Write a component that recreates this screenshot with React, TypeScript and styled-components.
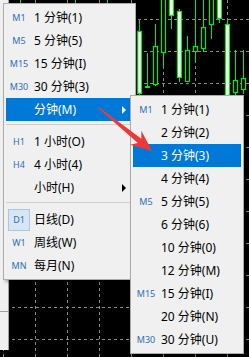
import React from 'react';
import styled, { createGlobalStyle } from 'styled-components';

const Global = createGlobalStyle`
  html, body { margin: 0; padding: 0; background: #000; }
  body {
    width: 249px; height: 357px; overflow: hidden;
    font-family: "Noto Sans", "Noto Sans CJK SC", sans-serif;
  }
`;

const Stage = styled.div`
  position: relative;
  width: 249px;
  height: 357px;
  background: #000;
  overflow: hidden;
`;

const Chart = styled.svg`
  display: block;
`;

const Overlay = styled.svg`
  position: absolute;
  left: 0;
  top: 0;
  pointer-events: none;
`;

const SidePanel = styled.div`
  position: absolute;
  left: 0;
  top: 0;
  width: 9px;
  height: 350px;
  box-sizing: border-box;
  background: #f0f0f0;
  border-right: 1px solid #a0a0a0;
  display: flex;
  flex-direction: column;
  justify-content: flex-end;
`;

const PanelRule = styled.div`
  height: 38px;
  border-top: 1px solid #a0a0a0;
`;

const Menu = styled.div<{ $left: number; $top: number; $width: number }>`
  position: absolute;
  left: ${(p) => p.$left}px;
  top: ${(p) => p.$top}px;
  width: ${(p) => p.$width}px;
  box-sizing: border-box;
  background: #f0f0f0;
  border: 1px solid #ababab;
  padding: 2px;
  box-shadow: 2px 2px 3px rgba(0, 0, 0, 0.3);
  display: flex;
  flex-direction: column;
`;

const Item = styled.div<{ $active?: boolean }>`
  display: grid;
  grid-template-columns: 26px 1fr auto;
  align-items: center;
  height: 23px;
  background: ${(p) => (p.$active ? '#0078d7' : 'transparent')};
  color: ${(p) => (p.$active ? '#ffffff' : '#000000')};
`;

const Tag = styled.span<{ $boxed?: boolean }>`
  justify-self: center;
  display: flex;
  align-items: center;
  justify-content: center;
  box-sizing: border-box;
  width: 22px;
  height: 22px;
  font-family: "Noto Sans", sans-serif;
  font-size: 9px;
  color: #2f6eb3;
  background: ${(p) => (p.$boxed ? '#d8e6f3' : 'transparent')};
  border: 1px solid ${(p) => (p.$boxed ? '#a9c7e3' : 'transparent')};
`;

const Label = styled.span`
  padding-left: 2px;
  font-size: 12px;
  line-height: 1;
  white-space: nowrap;
`;

const Caret = styled.span<{ $light?: boolean }>`
  width: 0;
  height: 0;
  margin-right: 7px;
  border-top: 4px solid transparent;
  border-bottom: 4px solid transparent;
  border-left: 4px solid ${(p) => (p.$light ? '#ffffff' : '#000000')};
`;

const Separator = styled.div`
  height: 1px;
  margin: 3px 0 5px 0;
  background: #cfcfcf;
`;

type Row = { tag?: string; text: string; active?: boolean; boxed?: boolean; sub?: boolean };

const mainTop: Row[] = [
  { tag: 'M1', text: '1 分钟(1)' },
  { tag: 'M5', text: '5 分钟(5)' },
  { tag: 'M15', text: '15 分钟(I)' },
  { tag: 'M30', text: '30 分钟(3)' },
  { text: '分钟(M)', active: true, sub: true },
];
const mainMid: Row[] = [
  { tag: 'H1', text: '1 小时(O)' },
  { tag: 'H4', text: '4 小时(4)' },
  { text: '小时(H)', sub: true },
];
const mainBottom: Row[] = [
  { tag: 'D1', text: '日线(D)', boxed: true },
  { tag: 'W1', text: '周线(W)' },
  { tag: 'MN', text: '每月(N)' },
];
const subRows: Row[] = [
  { tag: 'M1', text: '1 分钟(1)' },
  { text: '2 分钟(2)' },
  { text: '3 分钟(3)', active: true },
  { text: '4 分钟(4)' },
  { tag: 'M5', text: '5 分钟(5)' },
  { text: '6 分钟(6)' },
  { text: '10 分钟(0)' },
  { text: '12 分钟(M)' },
  { tag: 'M15', text: '15 分钟(I)' },
  { text: '20 分钟(N)' },
  { tag: 'M30', text: '30 分钟(U)' },
];

function MenuRow({ row }: { row: Row }) {
  return (
    <Item $active={row.active}>
      <Tag $boxed={row.boxed}>{row.tag ?? ''}</Tag>
      <Label>{row.text}</Label>
      {row.sub ? <Caret $light={row.active} /> : <span />}
    </Item>
  );
}

// candles: center x, body top, body bottom, wick top, wick bottom, bullish(white)
const candles: [number, number, number, number, number, boolean][] = [
  [139, 31, 93, 19, 96, true],
  [155, 46, 84, 24, 86, false],
  [163, -2, 52, -2, 67, false],
  [171, -2, 15, -2, 29, true],
  [179, 11, 77, 9, 82, true],
  [187, 50, 81, 36, 82, false],
  [195, 46, 51, -2, 62, false],
  [203, 27, 48, -2, 52, false],
  [211, -2, 24, -2, 39, false],
  [219, -2, 18, -2, 23, true],
  [227, 24, 100, 20, 100, true],
  [235, 80, 92, 50, 96, false],
  [243, 78, 89, 50, 94, false],
];

const GREEN = '#00f000';

function ChartBackground() {
  const hLines = Array.from({ length: 11 }, (_, k) => 19 + 32 * k);
  const vLines = Array.from({ length: 8 }, (_, k) => 3 + 32 * k);
  return (
    <Chart width={249} height={357} viewBox="0 0 249 357">
      <rect width="249" height="357" fill="#000" />
      {hLines.map((y) => (
        <line key={'h' + y} x1="0" x2="249" y1={y + 0.5} y2={y + 0.5} stroke="#8a8a8a" strokeDasharray="3 3" />
      ))}
      {vLines.map((x) => (
        <line key={'v' + x} x1={x + 0.5} x2={x + 0.5} y1="0" y2="357" stroke="#8a8a8a" strokeDasharray="3 3" />
      ))}
      {[20, 75, 107].map((x) => (
        <line key={'w' + x} x1={x + 0.5} x2={x + 0.5} y1="0" y2="4" stroke={GREEN} />
      ))}
      <line x1="147.5" x2="147.5" y1="53" y2="88" stroke={GREEN} />
      <rect x="145" y="86" width="5" height="2" fill={GREEN} />
      {candles.map(([cx, bt, bb, wt, wb, bull]) => (
        <g key={cx}>
          <line x1={cx + 0.5} x2={cx + 0.5} y1={wt} y2={wb} stroke={GREEN} />
          <rect x={cx - 1.5} y={bt + 0.5} width={4} height={bb - bt} fill={bull ? '#fff' : '#000'} stroke={GREEN} strokeWidth={1.2} />
        </g>
      ))}
    </Chart>
  );
}

function Arrow() {
  const T = [152, 151];
  const S = [99, 108];
  const dx = T[0] - S[0];
  const dy = T[1] - S[1];
  const len = Math.hypot(dx, dy);
  const u = [dx / len, dy / len];
  const p = [-u[1], u[0]];
  const at = (base: number[], a: number, b: number) => [base[0] + u[0] * a + p[0] * b, base[1] + u[1] * a + p[1] * b];
  const pts = [
    at(S, 0, 0.8),
    at(T, -16, 2.8),
    at(T, -21, 9),
    T,
    at(T, -21, -9),
    at(T, -16, -2.8),
    at(S, 0, -0.8),
  ];
  return (
    <Overlay width={249} height={357} viewBox="0 0 249 357">
      <polygon points={pts.map((q) => q.join(',')).join(' ')} fill="#ec3a3a" />
    </Overlay>
  );
}

export default function App() {
  return (
    <Stage>
      <Global />
      <ChartBackground />
      <SidePanel>
        <PanelRule />
      </SidePanel>
      <Menu $left={3} $top={3} $width={133}>
        {mainTop.map((r) => (
          <MenuRow key={r.text} row={r} />
        ))}
        <Separator />
        {mainMid.map((r) => (
          <MenuRow key={r.text} row={r} />
        ))}
        <Separator />
        {mainBottom.map((r) => (
          <MenuRow key={r.text} row={r} />
        ))}
      </Menu>
      <Menu $left={130} $top={95} $width={114}>
        {subRows.map((r) => (
          <MenuRow key={r.text} row={r} />
        ))}
      </Menu>
      <Arrow />
    </Stage>
  );
}
